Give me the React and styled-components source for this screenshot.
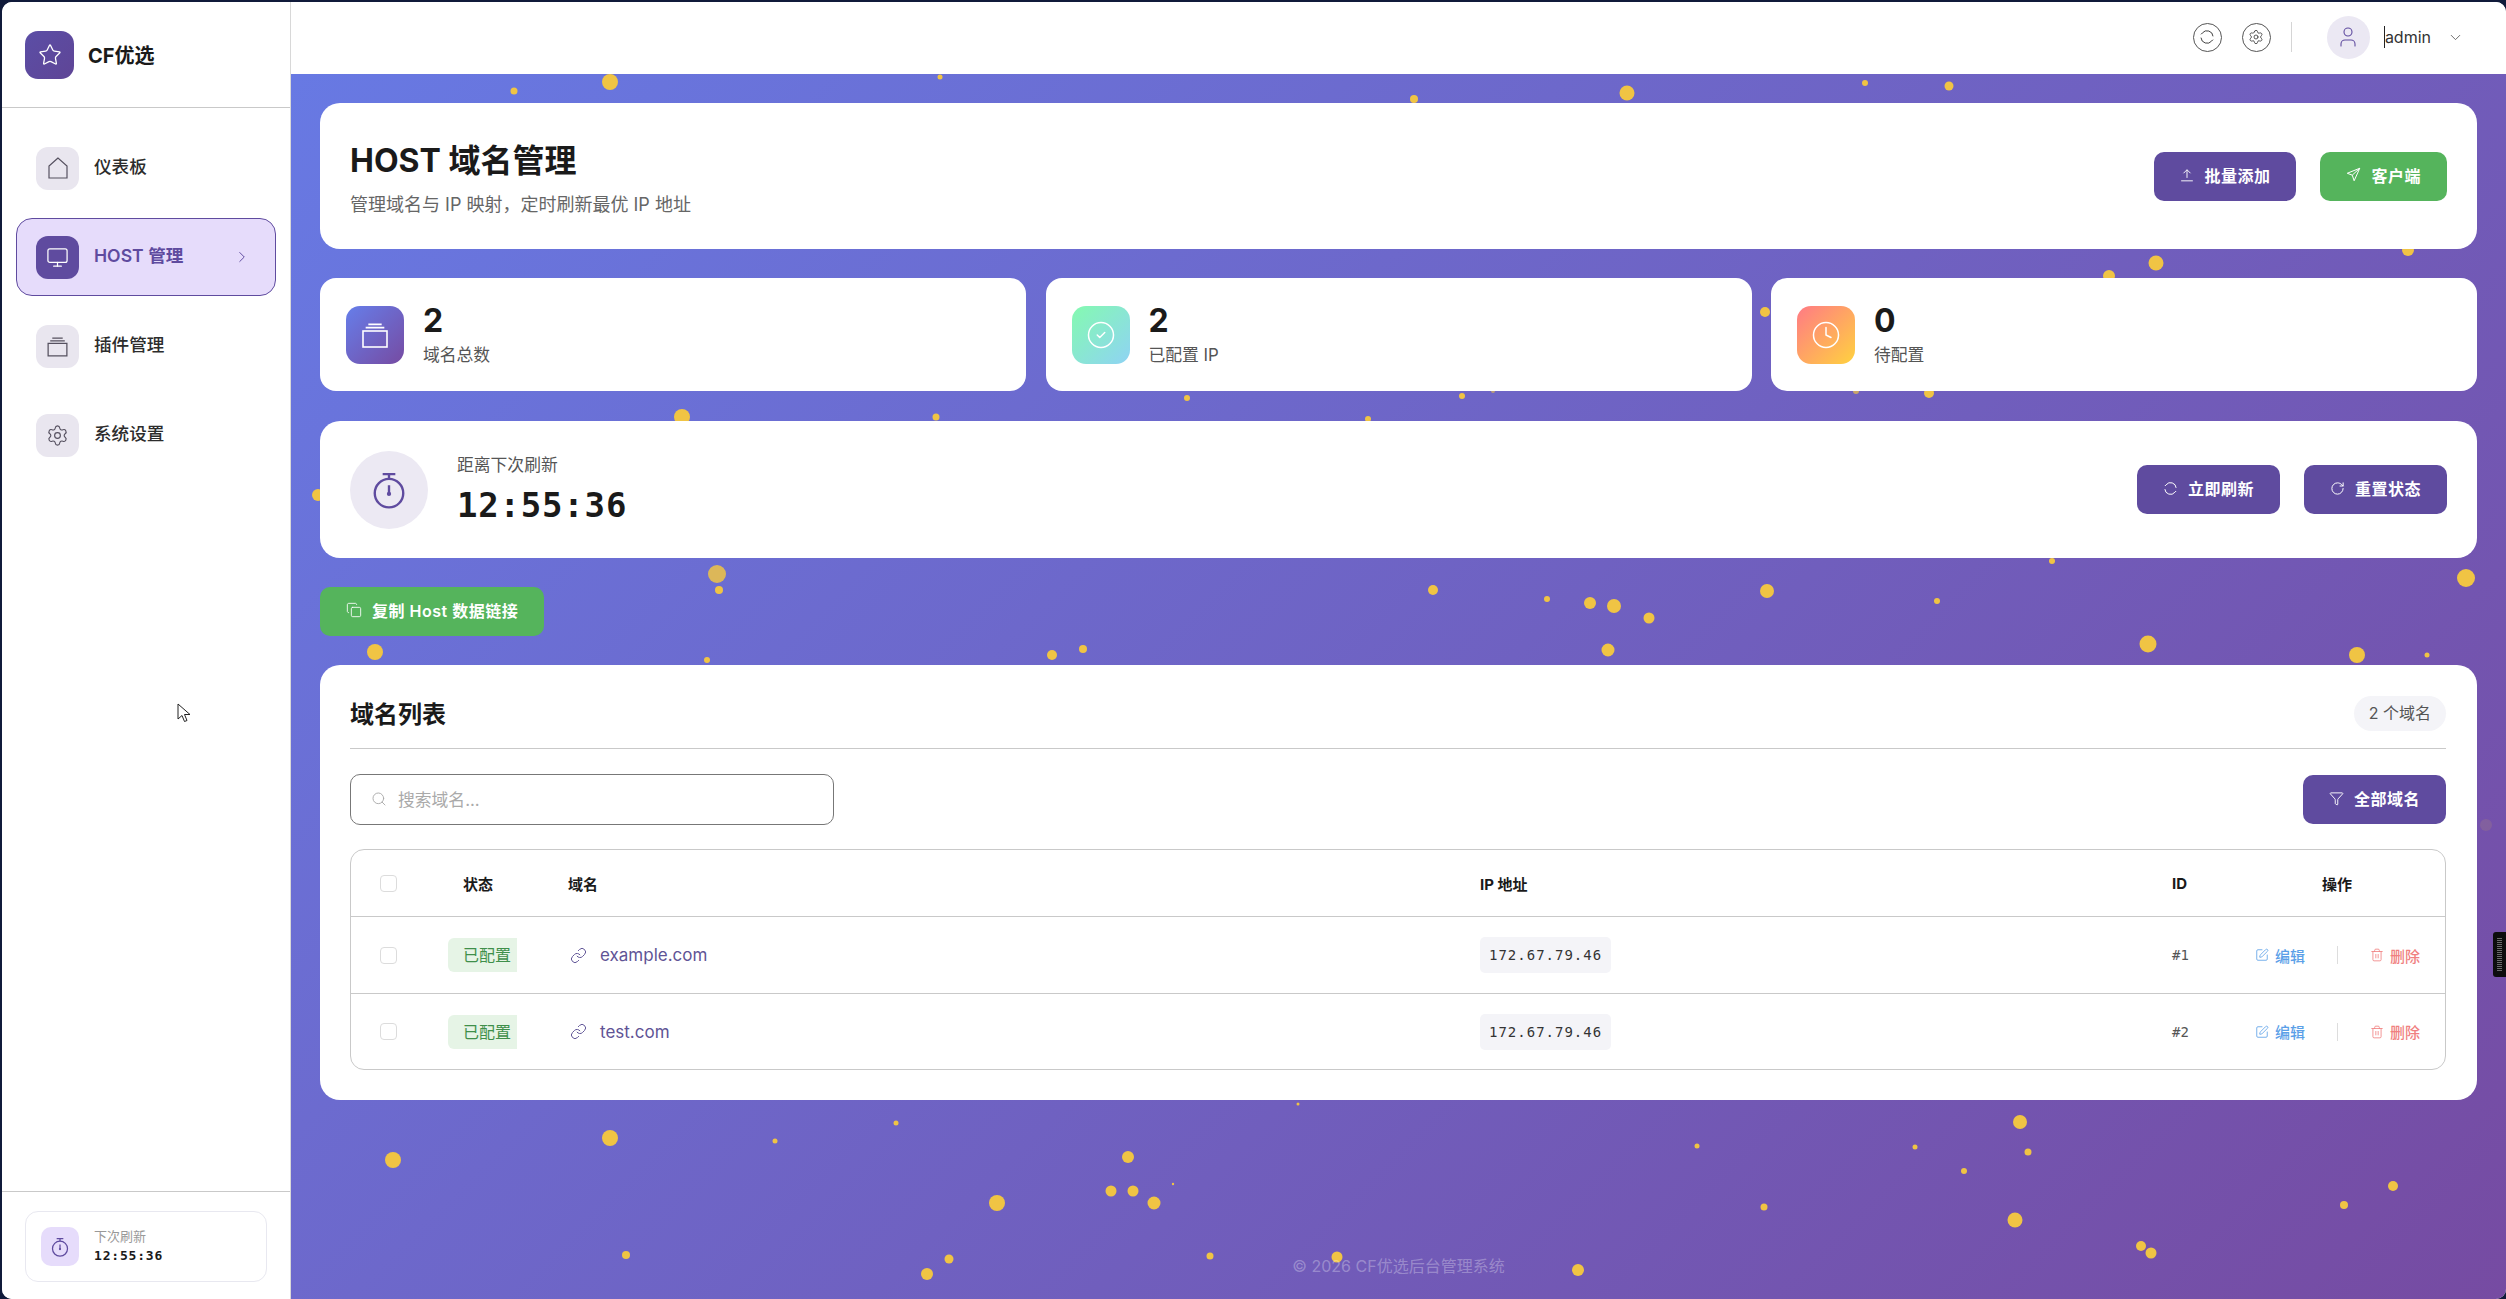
import React from 'react'
import styled, { createGlobalStyle } from 'styled-components'
import {
  Star,
  Monitor,
  Settings,
  ChevronRight,
  ChevronDown,
  User,
  Copy,
  Filter,
  SquarePen,
  Trash2,
  Link,
  CircleCheck,
  Clock,
  Search,
  RotateCw,
} from 'lucide-react'

const SANS = `Inter, 'Noto Sans CJK SC', sans-serif`
const MONO = `'DejaVu Sans Mono', 'Noto Sans CJK SC', monospace`
const PURPLE = '#5f4b9f'

const GlobalStyle = createGlobalStyle`
  html, body {
    margin: 0;
    padding: 0;
    background: #101a3a;
    overflow: hidden;
  }
  * {
    box-sizing: border-box;
  }
`

const Shell = styled.div`
  position: relative;
  width: 2506px;
  height: 1299px;
  padding: 2px 0 0 2px;
  font-family: ${SANS};
  color: #1a1a1a;
`

const Frame = styled.div`
  display: flex;
  width: 100%;
  height: 100%;
  border-radius: 10px;
  overflow: hidden;
  background: #fff;
`

const Sidebar = styled.aside`
  flex: 0 0 289px;
  display: flex;
  flex-direction: column;
  background: #fff;
  border-right: 1px solid #d8d8d8;
`

const Brand = styled.div`
  height: 106px;
  display: flex;
  align-items: center;
  gap: 14px;
  padding: 0 0 0 23px;
  border-bottom: 1px solid #c9c9c9;
  font-size: 20px;
  font-weight: 700;
`

const BrandMark = styled.div`
  width: 49px;
  height: 48px;
  border-radius: 13px;
  background: linear-gradient(135deg, #5b4ea6, #5f4596);
  color: #fff;
  display: flex;
  align-items: center;
  justify-content: center;
`

const Nav = styled.nav`
  flex: 1;
  display: flex;
  flex-direction: column;
  gap: 11px;
  padding: 21px 14px 0;
`

const NavItem = styled.div`
  height: 78px;
  display: flex;
  align-items: center;
  gap: 15px;
  padding: 0 19px;
  border-radius: 16px;
  font-size: 17.6px;
  font-weight: ${(p) => (p.$active ? 600 : 500)};
  color: ${(p) => (p.$active ? PURPLE : '#2c2c2c')};
  background: ${(p) => (p.$active ? '#e6dcfb' : 'transparent')};
  border: 1px solid ${(p) => (p.$active ? PURPLE : 'transparent')};
`

const NavIcon = styled.div`
  flex: 0 0 43px;
  height: 43px;
  border-radius: 12px;
  display: flex;
  align-items: center;
  justify-content: center;
  background: ${(p) => (p.$active ? PURPLE : '#e9e6ef')};
  color: ${(p) => (p.$active ? '#fff' : '#55505f')};
`

const NavLabel = styled.span`
  padding-bottom: 6px;
`

const NavArrow = styled.span`
  margin-left: auto;
  display: flex;
  color: ${PURPLE};
  margin-right: 5px;
`

const SideFoot = styled.div`
  height: 108px;
  padding: 19px 23px 0;
  border-top: 1px solid #c9c9c9;
`

const NextBox = styled.div`
  width: 242px;
  height: 71px;
  display: flex;
  align-items: center;
  gap: 15px;
  padding: 0 15px;
  border: 1px solid #e8e8f0;
  border-radius: 13px;
`

const NextIcon = styled.div`
  width: 38px;
  height: 39px;
  border-radius: 10px;
  background: #e6dcfb;
  color: ${PURPLE};
  display: flex;
  align-items: center;
  justify-content: center;
`

const NextLabel = styled.div`
  font-size: 13px;
  line-height: 19px;
  color: #999;
`

const NextTime = styled.div`
  font-family: ${MONO};
  font-size: 13px;
  font-weight: 700;
  line-height: 20px;
  letter-spacing: 0.8px;
`

const Column = styled.div`
  flex: 1;
  min-width: 0;
  display: flex;
  flex-direction: column;
`

const TopBar = styled.header`
  flex: 0 0 72px;
  display: flex;
  align-items: center;
  justify-content: flex-end;
  padding: 0 42px 2px 0;
  background: #fff;
`

const RoundButton = styled.div`
  width: 29px;
  height: 29px;
  margin-left: ${(p) => p.$gap || 0}px;
  border: 1px solid #555;
  border-radius: 50%;
  display: flex;
  align-items: center;
  justify-content: center;
  color: #333;
`

const TopDivider = styled.div`
  width: 1px;
  height: 30px;
  margin: 0 35px 0 20px;
  background: #d5d5d5;
`

const Avatar = styled.div`
  width: 43px;
  height: 43px;
  border-radius: 50%;
  background: #ebe8f3;
  color: ${PURPLE};
  display: flex;
  align-items: center;
  justify-content: center;
`

const UserName = styled.span`
  margin: 0 16px 0 14px;
  font-size: 16px;
  color: #333;
  border-left: 1px solid #222;
  line-height: 22px;
`

const Main = styled.main`
  position: relative;
  flex: 1;
  display: flex;
  flex-direction: column;
  padding: 29px 29px 0;
  background: linear-gradient(135deg, #667eea 0%, #764ba2 100%) -289px -72px / 2506px 1299px no-repeat;
  overflow: hidden;
`

const Particles = styled.svg`
  position: absolute;
  left: 0;
  top: 0;
  width: 2215px;
  height: 1225px;
  fill: #f0c444;
`

const Card = styled.section`
  position: relative;
  background: #fff;
  border-radius: ${(p) => p.$radius || 20}px;
`

const PageCard = styled(Card)`
  height: 146px;
  display: flex;
  align-items: center;
  justify-content: space-between;
  padding: 5px 30px 0;
`

const PageTitle = styled.h1`
  margin: 0 0 9px;
  font-size: 32px;
  line-height: 44px;
  font-weight: 700;
`

const PageSub = styled.p`
  margin: 0;
  font-size: 18px;
  line-height: 26px;
  color: #666;
`

const Actions = styled.div`
  display: flex;
  gap: 24px;
`

const HeadActions = styled(Actions)`
  margin-top: -5px;
`

const TimerActions = styled(Actions)`
  margin-left: auto;
`

const Button = styled.button`
  position: relative;
  height: 49px;
  display: inline-flex;
  align-items: center;
  gap: 10px;
  padding: 0 26px 3px;
  border: none;
  border-radius: 10px;
  font-family: ${SANS};
  font-size: 16px;
  font-weight: 600;
  letter-spacing: 0.5px;
  color: #fff;
  background: ${(p) => (p.$green ? '#55b45c' : PURPLE)};
`

const StatRow = styled.div`
  margin-top: 29px;
  display: grid;
  grid-template-columns: repeat(3, 1fr);
  gap: 19.5px;
`

const StatCard = styled(Card)`
  height: 113px;
  display: flex;
  align-items: center;
  gap: 19px;
  padding: 0 26px;
`

const StatIcon = styled.div`
  width: 58px;
  height: 58px;
  border-radius: 14px;
  background: ${(p) => p.$bg};
  color: #fff;
  display: flex;
  align-items: center;
  justify-content: center;
`

const StatValue = styled.div`
  font-size: 32px;
  font-weight: 700;
  line-height: 40px;
`

const StatLabel = styled.div`
  font-size: 16.8px;
  line-height: 28px;
  color: #555;
`

const TimerCard = styled(Card)`
  margin-top: 30px;
  height: 137px;
  display: flex;
  align-items: center;
  gap: 29px;
  padding: 0 30px;
`

const TimerCircle = styled.div`
  width: 78px;
  height: 78px;
  border-radius: 50%;
  background: #ece9f3;
  color: ${PURPLE};
  display: flex;
  align-items: center;
  justify-content: center;
`

const TimerLabel = styled.div`
  font-size: 16.8px;
  line-height: 24px;
  color: #555;
`

const TimerValue = styled.div`
  margin-top: 6px;
  font-family: ${MONO};
  font-size: 34px;
  font-weight: 700;
  line-height: 44px;
  letter-spacing: 0.8px;
`

const CopyRow = styled.div`
  margin-top: 29px;
`

const ListCard = styled(Card)`
  margin-top: 29px;
  height: 435px;
  padding: 31px 31px 0 30px;
`

const ListHead = styled.div`
  height: 53px;
  display: flex;
  align-items: flex-start;
  justify-content: space-between;
  border-bottom: 1px solid #c9c9c9;
`

const ListTitle = styled.h2`
  margin: 0;
  font-size: 24px;
  line-height: 38px;
  font-weight: 700;
`

const CountTag = styled.span`
  height: 35px;
  padding: 0 15px;
  border-radius: 18px;
  background: #f4f4f8;
  font-size: 16px;
  line-height: 35px;
  color: #555;
`

const Toolbar = styled.div`
  margin-top: 25px;
  display: flex;
  align-items: center;
  justify-content: space-between;
`

const SearchBox = styled.div`
  width: 484px;
  height: 51px;
  display: flex;
  align-items: center;
  gap: 11px;
  padding: 0 20px 2px;
  border: 1px solid #777;
  border-radius: 10px;
  font-size: 16.8px;
  color: #aaa;
`

const Table = styled.div`
  margin-top: 24px;
  border: 1px solid #c9c9c9;
  border-radius: 14px;
  overflow: hidden;
`

const Row = styled.div`
  display: grid;
  grid-template-columns: 97px 120px 912px 692px 68px 1fr;
  align-items: center;
  height: ${(p) => p.$height}px;
  border-bottom: ${(p) => (p.$last ? 'none' : '1px solid #c9c9c9')};
`

const HeadCell = styled.div`
  font-size: 15px;
  font-weight: 700;
  padding-left: ${(p) => p.$pad || 0}px;
`

const Check = styled.span`
  display: block;
  width: 17px;
  height: 17px;
  margin-left: 29px;
  border: 1px solid #dcdcdc;
  border-radius: 4px;
`

const StatusTag = styled.span`
  display: inline-block;
  height: 34px;
  padding: 0 6px 0 15px;
  border-radius: 6px 0 0 6px;
  background: #e6f4e6;
  color: #3f8f4a;
  font-size: 16px;
  line-height: 34px;
`

const DomainCell = styled.div`
  display: flex;
  align-items: center;
  gap: 13px;
  padding-left: 2px;
  font-size: 17px;
  color: #5f5496;
`

const IpChip = styled.span`
  display: inline-block;
  height: 36px;
  padding: 0 9px;
  border-radius: 5px;
  background: #f4f4f8;
  font-family: ${MONO};
  font-size: 14px;
  line-height: 36px;
  letter-spacing: 1px;
  color: #333;
`

const IdCell = styled.div`
  font-family: ${MONO};
  font-size: 14px;
  color: #555;
`

const Ops = styled.div`
  display: flex;
  align-items: center;
  padding-left: 15px;
`

const OpLink = styled.span`
  display: inline-flex;
  align-items: center;
  gap: 6px;
  font-size: 15px;
  font-weight: 500;
  color: ${(p) => p.$color};
`

const OpDivider = styled.span`
  width: 1px;
  height: 18px;
  margin: 0 32px;
  background: #ddd;
`

const Footer = styled.footer`
  position: relative;
  margin-top: auto;
  padding-bottom: 22px;
  text-align: center;
  font-size: 16px;
  color: rgba(255, 255, 255, 0.3);
`

const EdgeTab = styled.div`
  position: absolute;
  right: 0;
  top: 932px;
  width: 13px;
  height: 45px;
  padding: 5px 4px;
  border-radius: 3px 0 0 3px;
  background: #0d0d0d;
  &::after {
    content: '';
    display: block;
    height: 100%;
    background: repeating-linear-gradient(0deg, #0d0d0d 0 1px, #6a6a6a 1px 2px);
  }
`

const Pointer = styled.svg`
  position: absolute;
  left: 177px;
  top: 703px;
`

const HomeIcon = () => (
  <svg width='24' height='24' viewBox='0 0 24 24' fill='none' stroke='currentColor' strokeWidth='1.2'>
    <path d='M12 2 3 10v12h18V10Z' />
  </svg>
)

const FilesIcon = ({ size = 25 }) => (
  <svg width={size} height={size} viewBox='0 0 24 24' fill='none' stroke='currentColor' strokeWidth='1.2'>
    <rect x='3' y='9' width='18' height='12' />
    <path d='M5 6.5h14M7 4h10' />
  </svg>
)

const UploadIcon = () => (
  <svg width='14' height='14' viewBox='0 0 24 24' fill='none' stroke='currentColor' strokeWidth='1.6'>
    <path d='M2 22h20M12 17V3M6 9l6-6 6 6' />
  </svg>
)

const PlaneIcon = () => (
  <svg width='15' height='15' viewBox='0 0 24 24' fill='none' stroke='currentColor' strokeWidth='1.6'>
    <path d='M22 2 2 10l8 3 3 9ZM22 2 10 13' />
  </svg>
)

const SyncIcon = ({ size = 15, weight = 1.6 }) => (
  <svg width={size} height={size} viewBox='0 0 24 24' fill='none' stroke='currentColor' strokeWidth={weight}>
    <path d='M21 11a9 9 0 0 0-16-5L3 8M3 13a9 9 0 0 0 16 5l2-2' />
  </svg>
)

const StopwatchIcon = ({ size, weight }) => (
  <svg width={size} height={size} viewBox='0 0 24 24' fill='none' stroke='currentColor' strokeWidth={weight}>
    <circle cx='12' cy='14' r='9' />
    <path d='M8 2h8M12 2v3M12 9v5' />
    <circle cx='12' cy='14.5' r='0.6' fill='currentColor' />
  </svg>
)

const DOTS = [
  [514, 91, 3.5], [610, 82, 8], [940, 77, 2.5], [1414, 99, 4], [1627, 93, 7.5], [1865, 83, 3],
  [1949, 86, 4.5], [2156, 263, 7.5], [2109, 276, 6], [2408, 250, 6], [1929, 393, 5],
  [318, 495, 6], [682, 417, 8], [936, 417, 3.5], [1187, 398, 3], [1368, 419, 3], [1462, 396, 3],
  [1765, 312, 5], [1856, 391, 3, 0.7], [1493, 391, 2, 0.6],
  [717, 574, 9, 0.85], [719, 590, 4], [375, 652, 8], [707, 660, 3], [1052, 655, 5], [1083, 649, 4],
  [1433, 590, 5], [1547, 599, 3], [1590, 603, 6], [1614, 606, 7], [1649, 618, 5.5], [1608, 650, 6.5],
  [1767, 591, 7], [1937, 601, 3], [2148, 644, 8.5], [2357, 655, 8], [2427, 655, 2.5], [2466, 578, 9],
  [2052, 561, 3], [2486, 825, 6, 0.12],
  [393, 1160, 8], [610, 1138, 8], [775, 1141, 2.5], [896, 1123, 2.5], [1298, 1104, 1.5], [1128, 1157, 6],
  [1111, 1191, 5.5], [1133, 1191, 5.5], [1154, 1203, 6.5], [1173, 1184, 1.2], [997, 1203, 8], [626, 1255, 4],
  [927, 1274, 6], [949, 1259, 4.5], [1210, 1256, 3.5], [1337, 1257, 5.5], [1578, 1270, 6],
  [2020, 1122, 7], [1697, 1146, 2.5], [1915, 1147, 2.5], [2028, 1152, 3.5], [1964, 1171, 3], [1764, 1207, 3.5],
  [2015, 1220, 7.5], [2141, 1246, 5], [2151, 1253, 5.5], [2344, 1205, 4], [2393, 1186, 5],
]

const ROWS = [
  { id: 1, domain: 'example.com' },
  { id: 2, domain: 'test.com' },
]

export default function App() {
  return (
    <Shell>
      <GlobalStyle />
      <Frame>
        <Sidebar>
          <Brand>
            <BrandMark>
              <Star size={24} strokeWidth={1.3} />
            </BrandMark>
            CF优选
          </Brand>
          <Nav>
            <NavItem>
              <NavIcon><HomeIcon /></NavIcon>
              <NavLabel>仪表板</NavLabel>
            </NavItem>
            <NavItem $active>
              <NavIcon $active><Monitor size={23} strokeWidth={1.3} /></NavIcon>
              <NavLabel>HOST 管理</NavLabel>
              <NavArrow><ChevronRight size={18} strokeWidth={1.3} /></NavArrow>
            </NavItem>
            <NavItem>
              <NavIcon><FilesIcon /></NavIcon>
              <NavLabel>插件管理</NavLabel>
            </NavItem>
            <NavItem>
              <NavIcon><Settings size={23} strokeWidth={1.2} /></NavIcon>
              <NavLabel>系统设置</NavLabel>
            </NavItem>
          </Nav>
          <SideFoot>
            <NextBox>
              <NextIcon><StopwatchIcon size={20} weight={1.5} /></NextIcon>
              <div>
                <NextLabel>下次刷新</NextLabel>
                <NextTime>12:55:36</NextTime>
              </div>
            </NextBox>
          </SideFoot>
        </Sidebar>
        <Column>
          <TopBar>
            <RoundButton><SyncIcon size={16} weight={1.4} /></RoundButton>
            <RoundButton $gap={20}><Settings size={16} strokeWidth={1.2} /></RoundButton>
            <TopDivider />
            <Avatar><User size={24} strokeWidth={1.1} /></Avatar>
            <UserName>admin</UserName>
            <ChevronDown size={17} strokeWidth={1.2} color='#555' />
          </TopBar>
          <Main>
            <Particles viewBox='291 74 2215 1225'>
              {DOTS.map(([cx, cy, r, opacity = 1]) => (
                <circle key={`${cx}-${cy}`} cx={cx} cy={cy} r={r} fillOpacity={opacity} />
              ))}
            </Particles>
            <PageCard>
              <div>
                <PageTitle>HOST 域名管理</PageTitle>
                <PageSub>管理域名与 IP 映射，定时刷新最优 IP 地址</PageSub>
              </div>
              <HeadActions>
                <Button><UploadIcon />批量添加</Button>
                <Button $green><PlaneIcon />客户端</Button>
              </HeadActions>
            </PageCard>
            <StatRow>
              <StatCard $radius={16}>
                <StatIcon $bg='linear-gradient(135deg, #667eea, #764ba2)'><FilesIcon size={32} /></StatIcon>
                <div>
                  <StatValue>2</StatValue>
                  <StatLabel>域名总数</StatLabel>
                </div>
              </StatCard>
              <StatCard $radius={16}>
                <StatIcon $bg='linear-gradient(135deg, #84fab0, #8fd3f4)'><CircleCheck size={30} strokeWidth={1.2} /></StatIcon>
                <div>
                  <StatValue>2</StatValue>
                  <StatLabel>已配置 IP</StatLabel>
                </div>
              </StatCard>
              <StatCard $radius={16}>
                <StatIcon $bg='linear-gradient(135deg, #ff7a85, #ffd23f)'><Clock size={30} strokeWidth={1.2} /></StatIcon>
                <div>
                  <StatValue>0</StatValue>
                  <StatLabel>待配置</StatLabel>
                </div>
              </StatCard>
            </StatRow>
            <TimerCard>
              <TimerCircle><StopwatchIcon size={38} weight={1.5} /></TimerCircle>
              <div>
                <TimerLabel>距离下次刷新</TimerLabel>
                <TimerValue>12:55:36</TimerValue>
              </div>
              <TimerActions>
                <Button><SyncIcon /><span>立即刷新</span></Button>
                <Button><RotateCw size={15} strokeWidth={1.6} /><span>重置状态</span></Button>
              </TimerActions>
            </TimerCard>
            <CopyRow>
              <Button $green><Copy size={16} strokeWidth={1.3} />复制 Host 数据链接</Button>
            </CopyRow>
            <ListCard>
              <ListHead>
                <ListTitle>域名列表</ListTitle>
                <CountTag>2 个域名</CountTag>
              </ListHead>
              <Toolbar>
                <SearchBox><Search size={16} strokeWidth={1.4} />搜索域名...</SearchBox>
                <Button><Filter size={15} strokeWidth={1.5} />全部域名</Button>
              </Toolbar>
              <Table>
                <Row $height={67}>
                  <Check />
                  <HeadCell $pad={15}>状态</HeadCell>
                  <HeadCell>域名</HeadCell>
                  <HeadCell>IP 地址</HeadCell>
                  <HeadCell>ID</HeadCell>
                  <HeadCell $pad={82}>操作</HeadCell>
                </Row>
                {ROWS.map((row, i) => (
                  <Row key={row.id} $height={i === 0 ? 77 : 75} $last={i === ROWS.length - 1}>
                    <Check />
                    <div><StatusTag>已配置</StatusTag></div>
                    <DomainCell><Link size={17} strokeWidth={1.4} />{row.domain}</DomainCell>
                    <div><IpChip>172.67.79.46</IpChip></div>
                    <IdCell>#{row.id}</IdCell>
                    <Ops>
                      <OpLink $color='#5b9fe8'><SquarePen size={14} strokeWidth={1.4} />编辑</OpLink>
                      <OpDivider />
                      <OpLink $color='#f08080'><Trash2 size={14} strokeWidth={1.4} />删除</OpLink>
                    </Ops>
                  </Row>
                ))}
              </Table>
            </ListCard>
            <Footer>© 2026 CF优选后台管理系统</Footer>
          </Main>
        </Column>
      </Frame>
      <EdgeTab />
      <Pointer width='14' height='20' viewBox='0 0 14 20'>
        <path d='M1 1v15l4-3.5 2.5 6 2.5-1-2.5-6H13Z' fill='#fff' stroke='#222' strokeWidth='1' />
      </Pointer>
    </Shell>
  )
}
